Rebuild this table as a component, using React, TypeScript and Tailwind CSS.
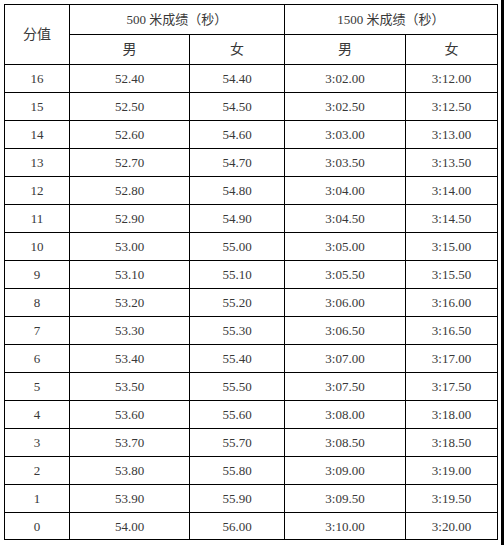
import React from "react";

const rows: [string, string, string, string, string][] = [
  ["16", "52.40", "54.40", "3:02.00", "3:12.00"],
  ["15", "52.50", "54.50", "3:02.50", "3:12.50"],
  ["14", "52.60", "54.60", "3:03.00", "3:13.00"],
  ["13", "52.70", "54.70", "3:03.50", "3:13.50"],
  ["12", "52.80", "54.80", "3:04.00", "3:14.00"],
  ["11", "52.90", "54.90", "3:04.50", "3:14.50"],
  ["10", "53.00", "55.00", "3:05.00", "3:15.00"],
  ["9", "53.10", "55.10", "3:05.50", "3:15.50"],
  ["8", "53.20", "55.20", "3:06.00", "3:16.00"],
  ["7", "53.30", "55.30", "3:06.50", "3:16.50"],
  ["6", "53.40", "55.40", "3:07.00", "3:17.00"],
  ["5", "53.50", "55.50", "3:07.50", "3:17.50"],
  ["4", "53.60", "55.60", "3:08.00", "3:18.00"],
  ["3", "53.70", "55.70", "3:08.50", "3:18.50"],
  ["2", "53.80", "55.80", "3:09.00", "3:19.00"],
  ["1", "53.90", "55.90", "3:09.50", "3:19.50"],
  ["0", "54.00", "56.00", "3:10.00", "3:20.00"],
];

export default function App() {
  return (
    <div
      className="flex w-[504px] h-[545px] bg-white text-[#383838]"
      style={{ fontFamily: '"Liberation Serif", "Noto Sans CJK SC", serif' }}
    >
      <div className="flex-1 pl-[4px] pt-[4px]">
        <div className="grid w-[494px] grid-cols-[64px_119px_94px_120px_91px] grid-rows-[29px_29px_repeat(16,27px)_26px] gap-[1px] bg-black p-[1px] text-[13px] leading-none">
          <div className="row-span-2 flex items-center justify-center bg-white text-[14px]">
            分值
          </div>
          <div className="col-span-2 flex items-center justify-center bg-white">
            500 米成绩（秒）
          </div>
          <div className="col-span-2 flex items-center justify-center bg-white">
            1500 米成绩（秒）
          </div>
          <div className="flex items-center justify-center bg-white text-[14px]">男</div>
          <div className="flex items-center justify-center bg-white text-[14px]">女</div>
          <div className="flex items-center justify-center bg-white text-[14px]">男</div>
          <div className="flex items-center justify-center bg-white text-[14px]">女</div>
          {rows.map((r) =>
            r.map((c, i) => (
              <div
                key={r[0] + "-" + i}
                className="flex items-center justify-center bg-white"
              >
                {c}
              </div>
            ))
          )}
        </div>
      </div>
      <div className="w-[3px] h-full bg-black" />
    </div>
  );
}
